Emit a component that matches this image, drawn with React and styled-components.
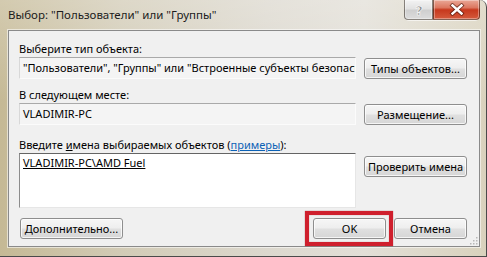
import React from 'react';
import styled, { createGlobalStyle } from 'styled-components';

const Global = createGlobalStyle`
  html, body { margin: 0; padding: 0; background: #ffffff; }
  body {
    font-family: "Noto Sans", "DejaVu Sans", sans-serif;
    font-size: 11px;
    color: #000;
  }
`;

const Window = styled.div`
  width: 487px;
  height: 257px;
  box-sizing: border-box;
  display: flex;
  flex-direction: column;
  padding: 0 6px 9px 8px;
  border-right: 1px solid #4a4a4a;
  border-bottom: 1px solid #4a4a4a;
  border-top-right-radius: 7px;
  background:
    linear-gradient(180deg, rgba(255,255,255,0.25) 0%, rgba(255,255,255,0) 40%),
    linear-gradient(90deg, #c5b995 0%, #d2cbb6 25%, #dcd8ce 55%, #e2dfd7 75%, #d9d2bd 100%);
`;

const TitleBar = styled.div`
  height: 30px;
  display: flex;
  align-items: flex-start;
  flex-shrink: 0;
`;

const Title = styled.div`
  flex: 1;
  font-size: 11.5px;
  line-height: 16px;
  padding-top: 7px;
  color: #1c1c1c;
  white-space: nowrap;
`;

const Controls = styled.div`
  display: flex;
  height: 20px;
  box-shadow: 0 1px 0 rgba(255,255,255,0.6);
  border-radius: 0 0 5px 5px;
`;

const CapButton = styled.div`
  width: ${p => p.$w}px;
  height: 20px;
  box-sizing: border-box;
  display: flex;
  align-items: center;
  justify-content: center;
  border: 1px solid rgba(50, 40, 30, 0.55);
  border-top: none;
  border-radius: ${p => p.$r};
  background: ${p => p.$bg};
  box-shadow: inset 0 0 0 1px rgba(255,255,255,0.35);
`;

const Client = styled.div`
  flex: 1;
  position: relative;
  box-sizing: border-box;
  background: #f0f0f0;
  border: 1px solid #8a8a8a;
  box-shadow: 0 0 0 1px rgba(255,255,255,0.55);
  padding: 10px 12px 6px 10px;
  display: flex;
  flex-direction: column;
`;

const Label = styled.div`
  height: 16px;
  line-height: 16px;
  white-space: nowrap;
  margin-top: ${p => p.$mt || 0}px;
  color: #000;
`;

const Row = styled.div`
  display: flex;
  gap: 8px;
  align-items: flex-start;
`;

const ReadField = styled.div`
  flex: 1;
  min-width: 0;
  height: 22px;
  box-sizing: border-box;
  background: #f4f4f4;
  border-top: 1px solid #a9a9a9;
  border-left: 1px solid #d8d8d8;
  border-right: 1px solid #fbfbfb;
  border-bottom: 1px solid #fbfbfb;
  padding: 0 3px;
  line-height: 20px;
  white-space: nowrap;
  overflow: hidden;
`;

const NamesBox = styled.div`
  flex: 1;
  min-width: 0;
  height: 55px;
  box-sizing: border-box;
  background: #ffffff;
  border-top: 1px solid #646464;
  border-left: 1px solid #8c8c8c;
  border-right: 1px solid #e6e6e6;
  border-bottom: 1px solid #e6e6e6;
  padding: 1px 3px;
  line-height: 16px;
`;

const Resolved = styled.span`
  text-decoration: underline;
`;

const Button = styled.button`
  width: ${p => p.$w || 103}px;
  height: 21px;
  flex-shrink: 0;
  margin-top: ${p => p.$mt || 0}px;
  box-sizing: border-box;
  padding: 0;
  font: inherit;
  color: #000;
  border: 1px solid #8e8e8e;
  border-radius: 3px;
  background: linear-gradient(180deg, #f6f6f6 0%, #eeeeee 48%, #e0e0e0 52%, #d6d6d6 100%);
  box-shadow: inset 0 0 0 1px rgba(255,255,255,0.75);
  white-space: nowrap;
  line-height: 19px;
`;

const Link = styled.span`
  color: #0c62b6;
  text-decoration: underline;
`;

const Key = styled.span`
  text-decoration: underline;
`;

const BottomRow = styled.div`
  display: flex;
  align-items: center;
  margin-top: 10px;
  padding-left: 1px;
`;

const Spacer = styled.div`
  flex: 1;
`;

const Highlight = styled.div`
  position: relative;
  margin-right: 8px;
  display: flex;
  &::after {
    content: "";
    position: absolute;
    top: -7px;
    bottom: -7px;
    left: -8px;
    right: -7px;
    border: 4px solid #cf1f2d;
    box-shadow: 0 0 1px rgba(120,0,0,0.6), inset 0 0 1px rgba(120,0,0,0.6);
    pointer-events: none;
  }
`;

const Grip = styled.svg`
  position: absolute;
  right: 1px;
  bottom: 1px;
`;

export default function App() {
  return (
    <>
      <Global />
      <Window>
        <TitleBar>
          <Title>Выбор: "Пользователи" или "Группы"</Title>
          <Controls>
            <CapButton
              $w={29}
              $r="0 0 0 4px"
              $bg="linear-gradient(180deg, #f3f3f3 0%, #e2e2e2 45%, #cfcfcf 55%, #dcdcdc 100%)"
            >
              <svg width="12" height="14" viewBox="0 0 12 14">
                <text x="6" y="12" textAnchor="middle" fontFamily="DejaVu Sans, sans-serif" fontWeight="bold" fontSize="13" fill="#8a8a8a" stroke="#ffffff" strokeWidth="0.6">?</text>
              </svg>
            </CapButton>
            <CapButton
              $w={47}
              $r="0 0 4px 0"
              $bg="linear-gradient(180deg, #eaa897 0%, #dc7760 40%, #c7381d 52%, #d45a3c 100%)"
            >
              <svg width="16" height="13" viewBox="0 0 16 13">
                <path d="M3.5 2.5 L12.5 10.5 M12.5 2.5 L3.5 10.5" stroke="#4a1408" strokeWidth="4.2" strokeLinecap="square" opacity="0.7" />
                <path d="M3.5 2.5 L12.5 10.5 M12.5 2.5 L3.5 10.5" stroke="#ffffff" strokeWidth="2.4" strokeLinecap="square" />
              </svg>
            </CapButton>
          </Controls>
        </TitleBar>
        <Client>
          <Label>Выберите тип объекта:</Label>
          <Row>
            <ReadField>"Пользователи", "Группы" или "Встроенные субъекты безопасности"</ReadField>
            <Button $mt={1}>Типы объектов...</Button>
          </Row>
          <Label $mt={8}>В следующем месте:</Label>
          <Row>
            <ReadField>VLADIMIR-PC</ReadField>
            <Button $mt={1}>Размещение...</Button>
          </Row>
          <Label $mt={12}>
            Введите <Key>и</Key>мена выбираемых объектов (<Link>примеры</Link>):
          </Label>
          <Row>
            <NamesBox>
              <Resolved>VLADIMIR-PC\AMD Fuel</Resolved>
            </NamesBox>
            <Button $mt={3}>Проверить имена</Button>
          </Row>
          <BottomRow>
            <Button>Дополнительно...</Button>
            <Spacer />
            <Highlight>
              <Button $w={73}>OK</Button>
            </Highlight>
            <Button $w={73}>Отмена</Button>
          </BottomRow>
          <Grip width="8" height="8" viewBox="0 0 8 8">
            <rect x="6" y="0" width="1.5" height="1.5" fill="#b8b8b8" />
            <rect x="3" y="3" width="1.5" height="1.5" fill="#b8b8b8" />
            <rect x="6" y="3" width="1.5" height="1.5" fill="#b8b8b8" />
            <rect x="0" y="6" width="1.5" height="1.5" fill="#b8b8b8" />
            <rect x="3" y="6" width="1.5" height="1.5" fill="#b8b8b8" />
            <rect x="6" y="6" width="1.5" height="1.5" fill="#b8b8b8" />
          </Grip>
        </Client>
      </Window>
    </>
  );
}
